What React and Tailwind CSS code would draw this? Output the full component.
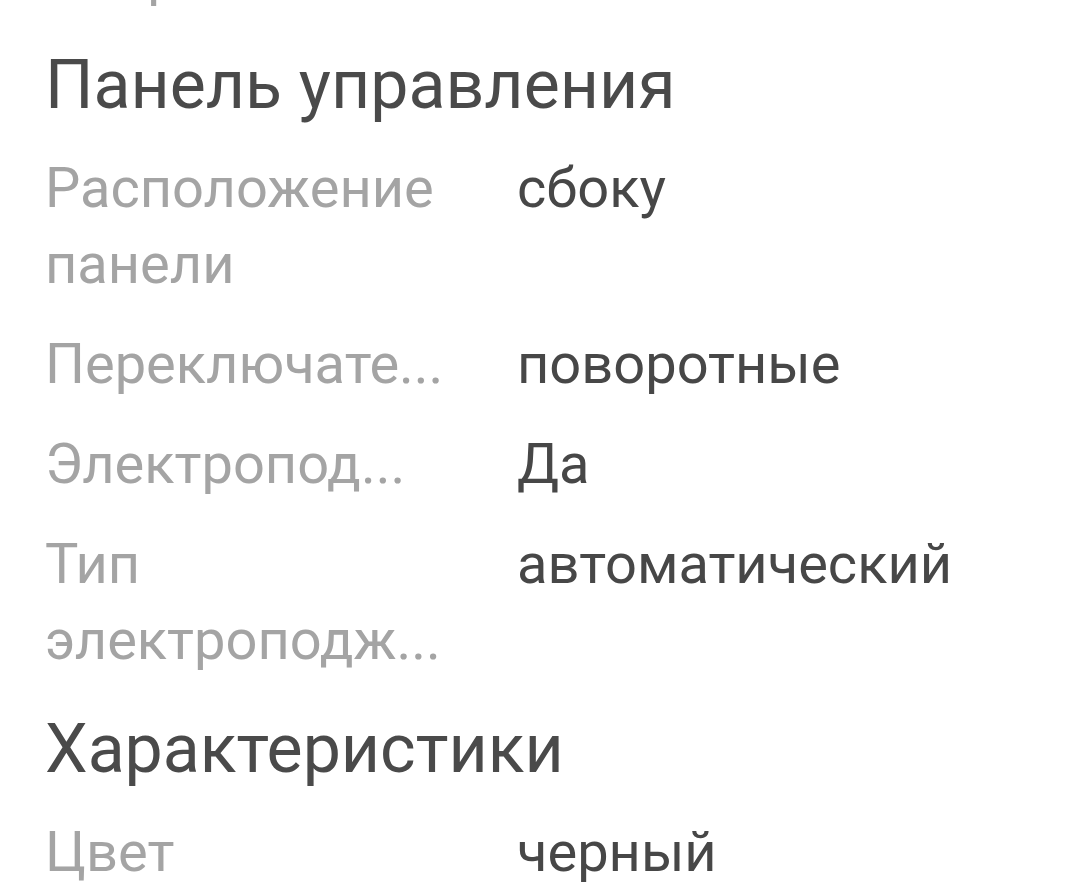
const sections = [
  {
    title: null,
    rows: [{ label: 'Покрытие', value: '' }],
  },
  {
    title: 'Панель управления',
    rows: [
      { label: 'Расположение панели', value: 'сбоку' },
      { label: 'Переключате...', value: 'поворотные' },
      { label: 'Электропод...', value: 'Да' },
      { label: 'Тип электроподж...', value: 'автоматический' },
    ],
  },
  {
    title: 'Характеристики',
    rows: [{ label: 'Цвет', value: 'черный' }],
  },
]

function SpecRow({ label, value }) {
  return (
    <div className="grid grid-cols-[400px_1fr] gap-x-[72px] text-[56px] leading-[76px]">
      <div className="text-[#a4a4a4] line-clamp-2">{label}</div>
      <div className="text-[#474747]">{value}</div>
    </div>
  )
}

export default function App() {
  return (
    <div className="h-[886px] w-[1080px] overflow-hidden bg-white font-['Roboto',sans-serif]">
      <div className="-mt-[62px] flex flex-col gap-[31px] px-[45px]">
        {sections.map((s, i) => (
          <section key={i} className="flex flex-col">
            {s.title && (
              <h2 className="mb-[25px] text-[68px] leading-[80px] text-[#4a4a4a]">
                {s.title}
              </h2>
            )}
            <div className="flex flex-col gap-[24px]">
              {s.rows.map(r => (
                <SpecRow key={r.label} {...r} />
              ))}
            </div>
          </section>
        ))}
      </div>
    </div>
  )
}
